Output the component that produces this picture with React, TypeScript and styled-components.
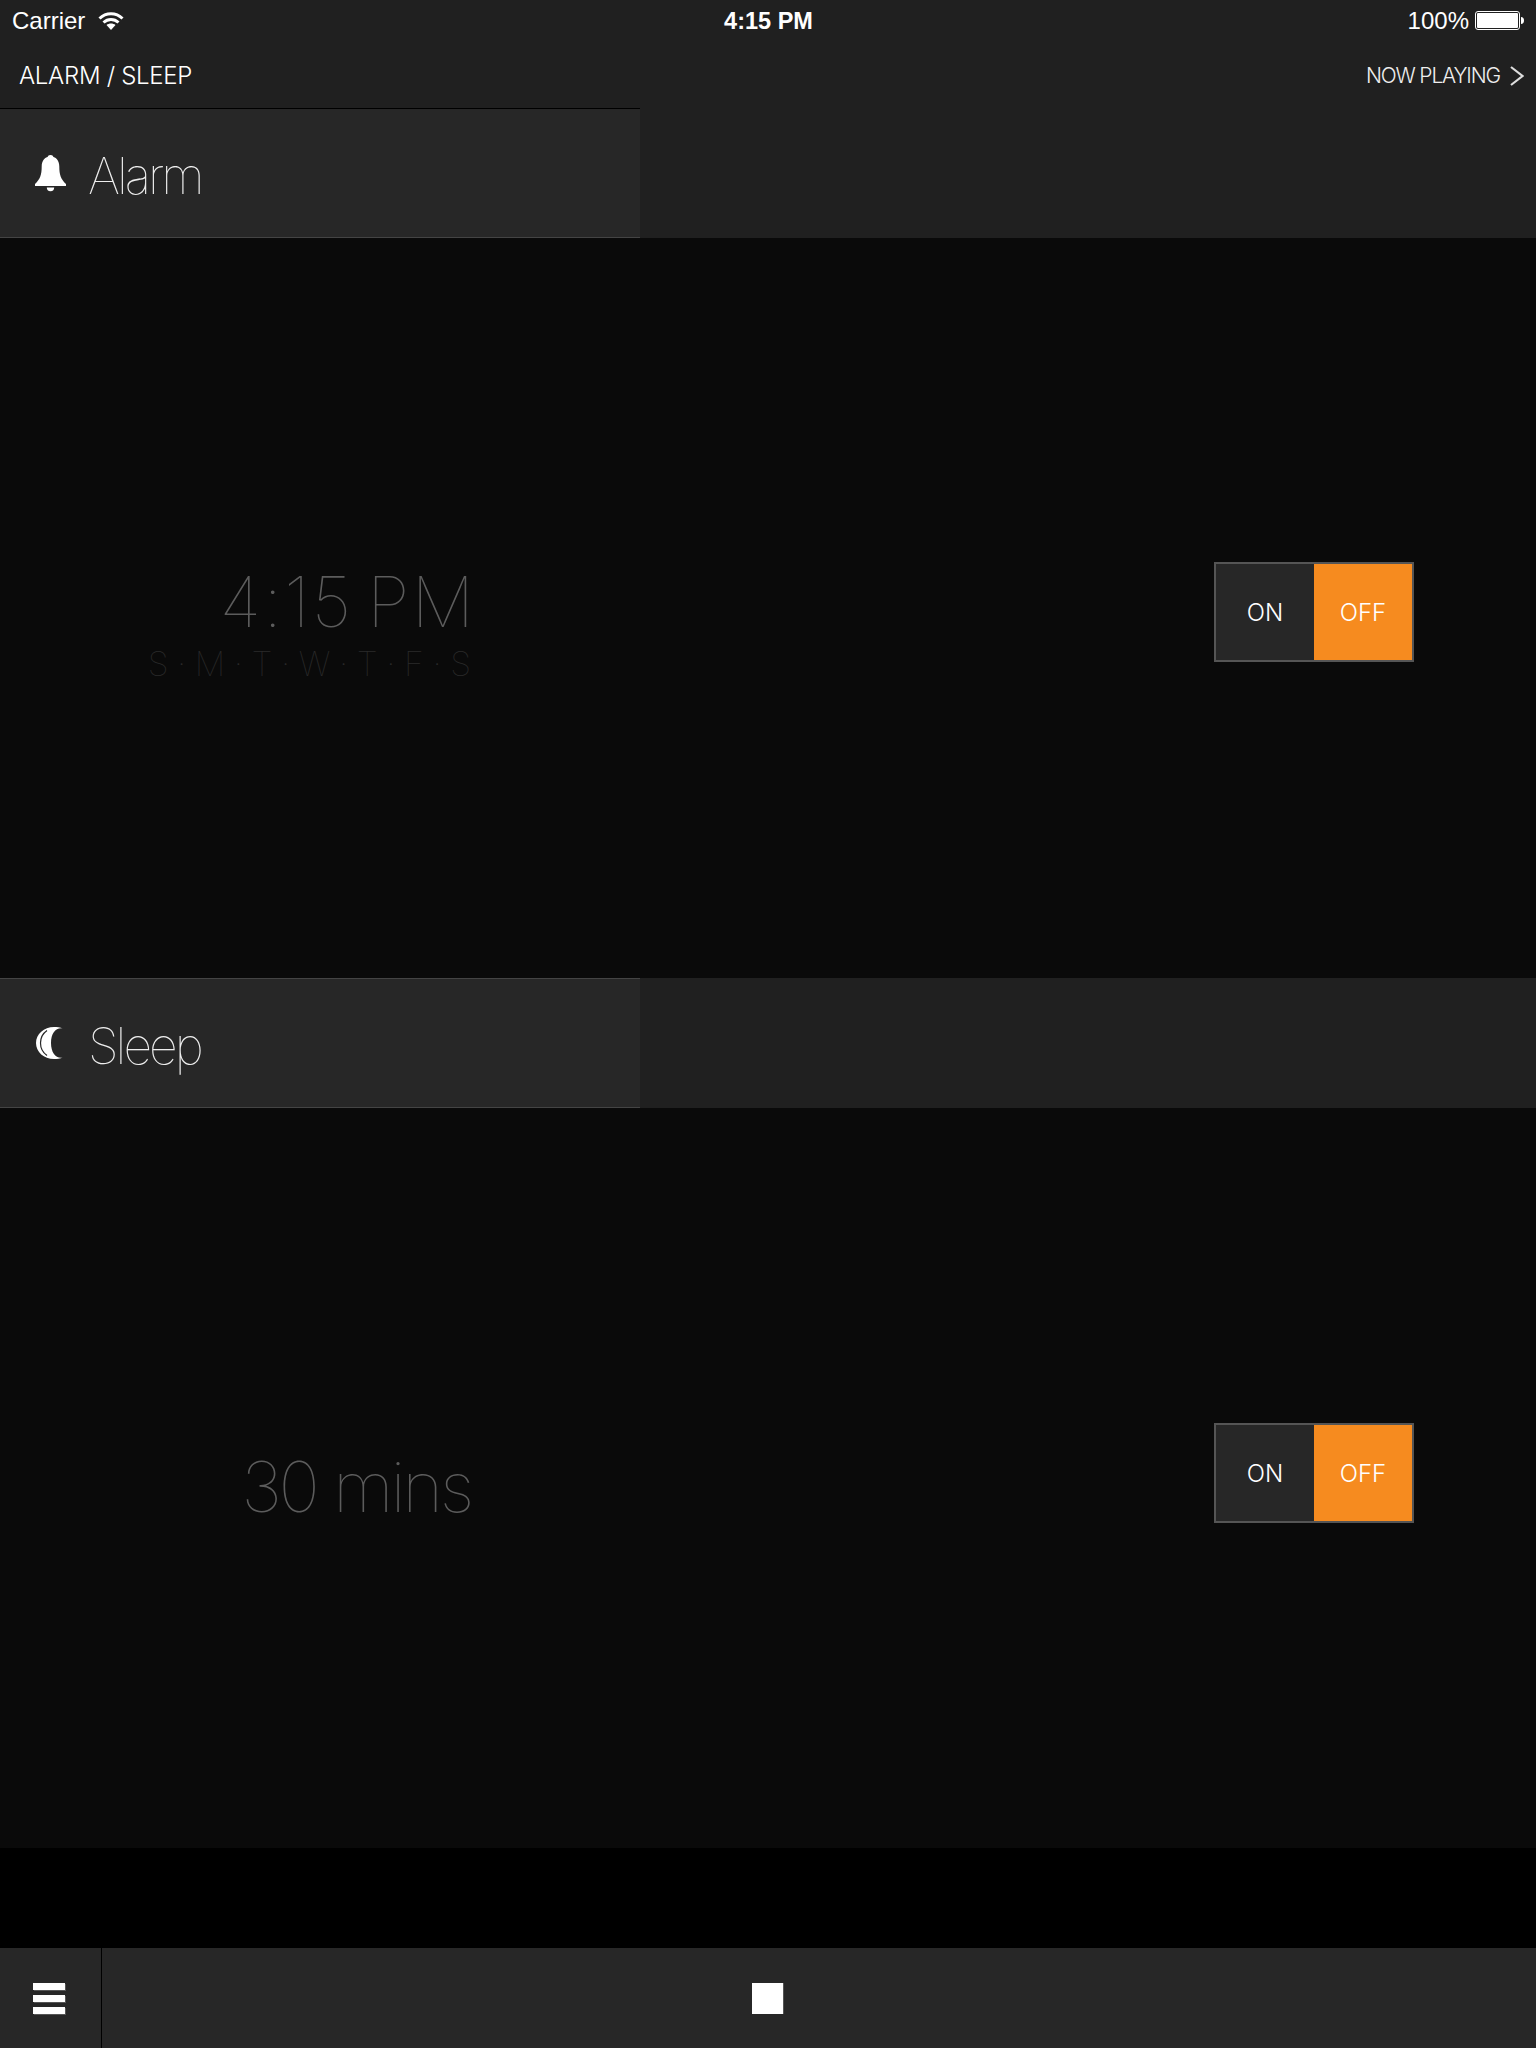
import React from 'react';
import styled, { createGlobalStyle } from 'styled-components';

const Global = createGlobalStyle`
  html, body { margin: 0; padding: 0; background: #000; }
  body { font-family: "Liberation Sans", Arial, sans-serif; color: #fff; }
`;

const Page = styled.div`
  width: 1536px;
  height: 2048px;
  display: flex;
  flex-direction: column;
  background: #000;
  overflow: hidden;
`;

const TopArea = styled.header`
  height: 108px;
  background: #202020;
  display: flex;
  flex-direction: column;
`;

const StatusBar = styled.div`
  height: 40px;
  padding-top: 2px;
  box-sizing: border-box;
  display: grid;
  grid-template-columns: 1fr auto 1fr;
  align-items: center;
  padding-left: 12px;
  padding-right: 11px;
  font-size: 24px;
`;

const StatusLeft = styled.div`
  display: flex;
  align-items: center;
  gap: 13px;
`;

const StatusTime = styled.div`
  font-weight: 700;
  font-size: 23.5px;
`;

const StatusRight = styled.div`
  display: flex;
  align-items: center;
  justify-content: flex-end;
  gap: 6px;
`;

const NavBar = styled.div`
  height: 68px;
  box-sizing: border-box;
  display: flex;
  justify-content: space-between;
  align-items: flex-start;
  padding: 18px 12px 0 19px;
`;

const NavTitle = styled.div`
  font-family: Inter, sans-serif;
  font-weight: 300;
  font-size: 24px;
  line-height: 36px;
  letter-spacing: -0.3px;
`;

const NavLink = styled.div`
  display: flex;
  align-items: center;
  gap: 10px;
  font-family: Inter, sans-serif;
  font-weight: 300;
  font-size: 21px;
  line-height: 36px;
  letter-spacing: -1.15px;
  color: #eee;
`;

const SectionHeader = styled.div`
  height: 130px;
  background: #202020;
`;

const HeaderPanel = styled.div<{ $topLine: string }>`
  width: 640px;
  height: 130px;
  box-sizing: border-box;
  background: #272727;
  border-top: 1px solid ${p => p.$topLine};
  border-bottom: 1px solid #444;
  display: flex;
  align-items: center;
  padding-left: 32px;
`;

const HeaderIcon = styled.div`
  width: 36px;
  display: flex;
  justify-content: center;
`;

const HeaderLabel = styled.div`
  margin-left: 20px;
  margin-top: 6px;
  font-family: Inter, sans-serif;
  font-weight: 100;
  font-size: 50px;
  line-height: 60px;
  letter-spacing: -3px;
  color: #eee;
`;

const Body = styled.section`
  height: 740px;
  background: #0a0a0a;
  display: flex;
  align-items: center;
  justify-content: space-between;
  padding: 0 122px 0 0;
  box-sizing: border-box;
`;

const ValueColumn = styled.div<{ $offset: number }>`
  width: 472px;
  margin-top: ${p => p.$offset}px;
  text-align: right;
  font-family: Inter, sans-serif;
  font-weight: 100;
`;

const BigValue = styled.div<{ $tracking: number; $words: number; $inset: number }>`
  font-size: 70px;
  line-height: 84px;
  letter-spacing: ${p => p.$tracking}px;
  word-spacing: ${p => p.$words}px;
  margin-right: ${p => p.$inset}px;
  color: #5c5c5c;
`;

const Days = styled.div`
  font-size: 34px;
  line-height: 40px;
  color: #2a2a2a;
  white-space: nowrap;
  word-spacing: -1px;
  margin-right: 1px;
`;

const Toggle = styled.div<{ $shift: number }>`
  width: 200px;
  height: 100px;
  box-sizing: border-box;
  border: 2px solid #555;
  display: flex;
  margin-top: ${p => p.$shift}px;
`;

const ToggleSide = styled.div<{ $active?: boolean }>`
  flex: 1;
  display: flex;
  align-items: center;
  justify-content: center;
  background: ${p => (p.$active ? '#f68b1f' : '#272727')};
  font-family: Inter, sans-serif;
  font-weight: 300;
  font-size: 24px;
`;

const Spacer = styled.div`
  height: 100px;
  background: #000;
`;

const Toolbar = styled.footer`
  height: 100px;
  background: #272727;
  display: flex;
  align-items: center;
`;

const MenuCell = styled.div`
  width: 102px;
  height: 100%;
  border-right: 1px solid #000;
  display: flex;
  flex-direction: column;
  gap: 5px;
  align-items: flex-start;
  justify-content: center;
  padding: 0 0 0 33px;
  box-sizing: border-box;
`;

const MenuBar = styled.div`
  width: 32px;
  height: 7px;
  background: #fff;
  box-shadow: 1px 1px 0 #555;
`;

const StopCell = styled.div`
  flex: 1;
  display: flex;
  align-items: center;
  justify-content: center;
  padding-right: 104px;
`;

const StopSquare = styled.div`
  width: 31px;
  height: 31px;
  background: #fff;
  box-shadow: 1px 0 0 #555;
`;

const Wifi = () => (
  <svg width="26" height="20" viewBox="0 0 26 20" fill="none" stroke="#fff" strokeWidth="3">
    <path d="M1.500 7.500C8 1.200 18 1.200 24.500 7.500" />
    <path d="M5.500 11.500C9.800 7.500 16.200 7.500 20.500 11.500" />
    <path d="M13 19l-4.500-5c2.600-2 6.400-2 9 0z" fill="#fff" stroke="none" />
  </svg>
);

const Battery = () => (
  <svg width="50" height="20" viewBox="0 0 50 20">
    <rect x="0.500" y="0.500" width="44" height="18" rx="2.500" fill="none" stroke="#fff" />
    <rect x="2" y="2" width="41" height="15" rx="1" fill="#fff" />
    <path d="M46 6c2 0 3 1.500 3 3.500S48 13 46 13z" fill="#fff" />
  </svg>
);

const Chevron = () => (
  <svg width="14" height="20" viewBox="0 0 14 20" fill="none" stroke="#ddd" strokeWidth="2.200">
    <path d="M1 1l11.500 9L1 19" />
  </svg>
);

const Bell = () => (
  <svg width="31" height="37" viewBox="0 0 31 37" fill="#fff">
    <circle cx="15.500" cy="3" r="3" />
    <path d="M15.500 1.500c5.500 0 8.800 4 8.800 10 0 8 1.500 12.500 6.700 17.500v2H0v-2c5.200-5 6.700-9.500 6.700-17.500 0-6 3.300-10 8.800-10z" />
    <path d="M11.800 32.500h7.400a3.700 3.700 0 0 1-7.400 0z" />
  </svg>
);

const Moon = () => (
  <svg width="28" height="32" viewBox="0 0 28 32">
    <path fill="#fff" d="M27 1.500C20 .2 15 6 15 16s5 15.800 12 14.500C24 32 21 32 18 32 8 32 0 25 0 16S8 0 18 0c3 0 6 0 9 1.500z" />
    <path fill="none" stroke="#272727" strokeWidth="1.200" d="M11 3.500C6 7 4.500 12 4.500 16s1.500 9 6.500 12.500" />
  </svg>
);

const Section = ({ icon, label, topLine, offset, shift, children }: { icon: React.ReactNode; label: string; topLine: string; offset: number; shift: number; children: React.ReactNode }) => (
  <>
    <SectionHeader>
      <HeaderPanel $topLine={topLine}>
        <HeaderIcon>{icon}</HeaderIcon>
        <HeaderLabel>{label}</HeaderLabel>
      </HeaderPanel>
    </SectionHeader>
    <Body>
      <ValueColumn $offset={offset}>{children}</ValueColumn>
      <Toggle $shift={shift}>
        <ToggleSide>ON</ToggleSide>
        <ToggleSide $active>OFF</ToggleSide>
      </Toggle>
    </Body>
  </>
);

export default function App() {
  return (
    <Page>
      <Global />
      <TopArea>
        <StatusBar>
          <StatusLeft>Carrier <Wifi /></StatusLeft>
          <StatusTime>4:15 PM</StatusTime>
          <StatusRight>100% <Battery /></StatusRight>
        </StatusBar>
        <NavBar>
          <NavTitle>ALARM / SLEEP</NavTitle>
          <NavLink>NOW PLAYING <Chevron /></NavLink>
        </NavBar>
      </TopArea>
      <Section icon={<Bell />} label="Alarm" topLine="#000" offset={28} shift={8}>
        <BigValue $tracking={2} $words={-8} $inset={-4}>4:15 PM</BigValue>
        <Days>S · M · T · W · T · F · S</Days>
      </Section>
      <Section icon={<Moon />} label="Sleep" topLine="#444" offset={18} shift={-10}>
        <BigValue $tracking={-3.3} $words={0} $inset={1}>30 mins</BigValue>
      </Section>
      <Spacer />
      <Toolbar>
        <MenuCell><MenuBar /><MenuBar /><MenuBar /></MenuCell>
        <StopCell><StopSquare /></StopCell>
      </Toolbar>
    </Page>
  );
}
